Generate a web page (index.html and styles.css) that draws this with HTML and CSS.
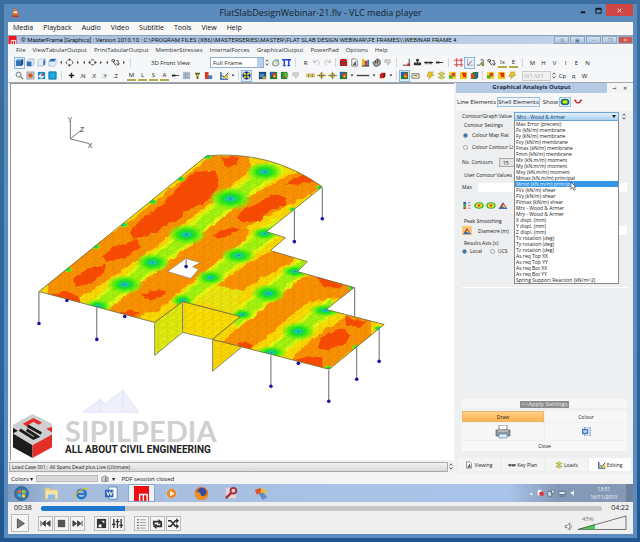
FILE: index.html
```html
<!DOCTYPE html>
<html lang="en">
<head>
<meta charset="utf-8">
<title>FlatSlabDesignWebinar-21.flv - VLC media player</title>
<link rel="stylesheet" href="styles.css">
</head>
<body>
<svg class="defs" width="0" height="0" aria-hidden="true">
  <symbol id="cube" viewBox="0 0 10 10"><path d="M1 3l2-2h6v6l-2 2H1z" fill="#2f6fb8"/><path d="M1 3l2-2h6L7 3z" fill="#74a9dd"/><path d="M7 3l2-2v6L7 9z" fill="#1c467c"/></symbol>
  <symbol id="cube-front" viewBox="0 0 10 10"><path d="M1 3l2-2h6v6l-2 2H1z" fill="#d9e8f5" stroke="#7791ad" stroke-width=".5"/><path d="M1 4h5v5H1z" fill="#2f6fb8"/></symbol>
  <symbol id="cube-side" viewBox="0 0 10 10"><path d="M1 3l2-2h6v6l-2 2H1z" fill="#e3eef7" stroke="#7791ad" stroke-width=".5"/><path d="M7 3l2-2v6L7 9z" fill="#2f6fb8"/></symbol>
  <symbol id="cube-top" viewBox="0 0 10 10"><path d="M1 3l2-2h6v6l-2 2H1z" fill="#e3eef7" stroke="#7791ad" stroke-width=".5"/><path d="M1 4l2-3h6L7 4z" fill="#2f6fb8"/></symbol>
  <symbol id="left" viewBox="0 0 6 10"><path d="M4 3v4L2 5z" fill="#444"/></symbol>
  <symbol id="right" viewBox="0 0 6 10"><path d="M2 3v4l2-2z" fill="#444"/></symbol>
  <symbol id="down" viewBox="0 0 6 10"><path d="M1.500 4h3L3 6z" fill="#222"/></symbol>
  <symbol id="rot-v" viewBox="0 0 10 10"><path d="M3 3L5 1l2 2M3 7l2 2 2-2M8 3.500c1 1 1 2 0 3M2 3.500c-1 1-1 2 0 3M5 1v2M5 7v2" fill="none" stroke="#333"/></symbol>
  <symbol id="rot-h" viewBox="0 0 10 10"><path d="M3 3L1 5l2 2M7 3l2 2-2 2M3.500 2.500c1-1 2-1 3 0M3.500 7c1 1 2 1 3 0M1 5h2M7 5h2" fill="none" stroke="#333"/></symbol>
  <symbol id="rot-z" viewBox="0 0 10 10"><path d="M1 4V2h3v2H2l2 2M6 3h2v4M6 6l2 2 1.500-2M3 6l3 2" fill="none" stroke="#444"/></symbol>
  <symbol id="spin" viewBox="0 0 6 10"><path d="M1.500 4L3 2l1.500 2M1.500 6L3 8l1.500-2" fill="none" stroke="#333" stroke-width=".8"/></symbol>
  <symbol id="hand" viewBox="0 0 10 10"><path d="M2 4l3-2 3 1 1 4-3 2-4-1z" fill="#eee0b8" stroke="#6785a8"/><circle cx="7" cy="3" r="2" fill="#8bb5dc"/></symbol>
  <symbol id="tt" viewBox="0 0 10 10"><path d="M0 2h10M2.500 2v6M7.500 2v6M1 8.500h3M6 8.500h3" fill="none" stroke="#2144e0" stroke-width="1.600"/></symbol>
  <symbol id="undo" viewBox="0 0 10 10"><path d="M2 2v3h3M2 5c2-4 7-2 6 1L6 8" fill="none" stroke="#bbb"/></symbol>
  <symbol id="redo" viewBox="0 0 10 10"><path d="M8 2v3H5M8 5C6 1 1 3 2 6l2 2" fill="none" stroke="#bbb"/></symbol>
  <symbol id="stack" viewBox="0 0 10 10"><path d="M2 1h6l1 2v6H1V3z" fill="#c9151a"/><path d="M1 4h8M1 7h8" stroke="#555"/></symbol>
  <symbol id="page" viewBox="0 0 10 10"><path d="M2 1h4l2 2v6H2z" fill="#fff" stroke="#777"/><path d="M3 8l3-5 1 5z" fill="#555"/></symbol>
  <symbol id="chart" viewBox="0 0 10 10"><path d="M1 1h3v8H1z" fill="#e2bd24"/><path d="M4 3h3v6H4z" fill="#c53b34"/><path d="M7 2h2v7H7z" fill="#247bb4"/><path d="M1 9h8" stroke="#333"/></symbol>
  <symbol id="bino" viewBox="0 0 10 10"><path d="M1 5l3-2 2-2 3 2v4L6 9H3z" fill="#aaa" stroke="#444"/><path d="M4 3v3M6 2v4" stroke="#333"/></symbol>
  <symbol id="ghost" viewBox="0 0 10 10"><path d="M2 2h6v3L5 8V5H2z" fill="#d3d3d3" stroke="#bdbdbd"/></symbol>
  <symbol id="axis-red" viewBox="0 0 10 10"><path d="M8 1v6M1 8h7" stroke="#333" fill="none"/><path d="M6 6h3v3H6z" fill="#d1242b"/></symbol>
  <symbol id="person" viewBox="0 0 10 10"><circle cx="5" cy="2.500" r="1.600" fill="#333"/><path d="M1 8V5h2l1 1V4h2v2l1-1h2v3z" fill="#333"/></symbol>
  <symbol id="link" viewBox="0 0 10 10"><path d="M1 4h3v3H1zM5 4h4v3H5z" fill="#777"/><path d="M0 5h10" stroke="#222"/></symbol>
  <symbol id="member" viewBox="0 0 10 10"><path d="M1 5h8" stroke="#333"/><path d="M1 4h4v2H1z" fill="#222"/></symbol>
  <symbol id="grid" viewBox="0 0 10 10"><path d="M3 0v10M8 0v10M0 2.500h10M0 7.500h10" stroke="#d53535"/></symbol>
  <symbol id="axes" viewBox="0 0 10 10"><path d="M3 1v7h6" fill="none" stroke="#8b8bb0" stroke-width=".8"/><path d="M3 8l5-5" stroke="#b33"/></symbol>
  <symbol id="node" viewBox="0 0 10 10"><path d="M1 8h3l3-4M5 2h3v3" fill="none" stroke="#555"/><path d="M6 5h3v4H6z" fill="#8a8b37"/></symbol>
  <symbol id="star" viewBox="0 0 10 10"><path d="M5 2v6M2 5h6" stroke="#222" stroke-width="1.500"/></symbol>
  <symbol id="lens" viewBox="0 0 10 10"><circle cx="4" cy="4" r="2.800" fill="#dce9f2" stroke="#777"/><path d="M6 6l3 3" stroke="#777" stroke-width="1.400"/></symbol>
  <symbol id="zoomred" viewBox="0 0 10 10"><path d="M1 1h8v8H1z" fill="#c2c9cf" stroke="#777" stroke-width=".6"/><circle cx="5" cy="5" r="2.500" fill="#d35720"/></symbol>
  <symbol id="zoomblue" viewBox="0 0 10 10"><path d="M1 1h8v8H1z" fill="#1689d3"/><path d="M1 6l4-4 3 4-3 3z" fill="#cfe9f5"/><circle cx="6" cy="4" r="1.500" fill="#d34b30"/></symbol>
  <symbol id="bluesq" viewBox="0 0 10 10"><path d="M1 1h8v8H1z" fill="#12aee2" stroke="#17689b"/></symbol>
  <symbol id="grey" viewBox="0 0 10 10"><path d="M1 1h8v8H1z" fill="#aebfd1"/><path d="M1 4h8M1 7h8M4 1v8" stroke="#8097b1" stroke-width=".6"/></symbol>
  <symbol id="funnel" viewBox="0 0 10 10"><path d="M2 2h6L6 6v3H4V6z" fill="#575c2a"/><path d="M4 4h3v2H4z" fill="#ded43c"/></symbol>
  <symbol id="steps" viewBox="0 0 10 10"><path d="M1 1h4v4h4v4H1z" fill="#d83d2a"/><path d="M5 5h4v4H5z" fill="#4385d1"/></symbol>
  <symbol id="pencil" viewBox="0 0 10 10"><path d="M1 1v8h8" fill="none" stroke="#2458a6" stroke-width="1.500"/><path d="M2 5l3 2 4-5" fill="none" stroke="#222"/><path d="M3 8l6-4v4z" fill="#e6c726"/></symbol>
  <symbol id="wheel" viewBox="0 0 10 10"><circle cx="5" cy="5" r="4.500" fill="#15319b"/><path d="M2 2l6 6M8 2L2 8" stroke="#f1e12c" stroke-width="2"/><circle cx="5" cy="5" r="1.300" fill="#333"/></symbol>
  <symbol id="map-blue" viewBox="0 0 10 10"><path d="M1 1h8v8H1z" fill="#1d4676"/><path d="M2 3h5v4H2z" fill="#3b91c5"/><path d="M5 6h4v3H5z" fill="#b99a4e"/></symbol>
  <symbol id="map" viewBox="0 0 10 10"><path d="M1 1h8v8H1z" fill="#187c35"/><path d="M1 1h4v4H1z" fill="#2660c9"/><path d="M4 3l4-1v5L5 8z" fill="#ed3e1c"/><path d="M5 5h2v2H5z" fill="#f8de20"/></symbol>
  <symbol id="map-green" viewBox="0 0 10 10"><path d="M1 1h7v8H1z" fill="#23872f"/><path d="M4 2h5v5H4z" fill="#67b24c"/><path d="M3 6h3v2H3z" fill="#ae5920"/></symbol>
  <symbol id="map-yellow" viewBox="0 0 10 10"><path d="M1 1h8v8H1z" fill="#e5d838"/><path d="M4 2h4v4H4z" fill="#df3f22"/><path d="M1 5h4v3H1z" fill="#48a62f"/></symbol>
  <symbol id="map-red" viewBox="0 0 10 10"><path d="M1 1h8v8H1z" fill="#f2cd21"/><path d="M3 2h5v5H5z" fill="#e52a18"/></symbol>
  <symbol id="block" viewBox="0 0 10 10"><path d="M1 3l3-2h5v6L7 9H1z" fill="#247c3b"/><path d="M1 3h4v5H1z" fill="#de4230"/><path d="M7 3l2-2v6L7 9z" fill="#205dae"/></symbol>
  <symbol id="beam" viewBox="0 0 10 10"><path d="M0 3h10v4H0z" fill="#d9c66a"/><path d="M3 3v4M7 3v4" stroke="#777"/></symbol>
  <symbol id="beam2" viewBox="0 0 10 10"><path d="M1 5l4-4 4 4-4 4z" fill="#d6b932"/><path d="M0 5h10M5 1v8" stroke="#777"/></symbol>
  <symbol id="line" viewBox="0 0 14 10"><path d="M0 5h14" stroke="#444" stroke-width="1.500"/></symbol>
  <symbol id="redcube" viewBox="0 0 10 10"><path d="M2 4l2-2h4v4L6 8H2z" fill="#c62724"/><path d="M6 4l2-2v4L6 8z" fill="#5f1717"/></symbol>
  <symbol id="layers" viewBox="0 0 10 10"><path d="M1 3l4-2 4 2-4 2zM1 7l4-2 4 2-4 2z" fill="#d6d34c" stroke="#86893c" stroke-width=".5"/></symbol>
  <symbol id="bolt" viewBox="0 0 10 10"><path d="M3 1h5L6 4h3L3 9l1-3H1z" fill="#ebc425" stroke="#9a852d" stroke-width=".5"/></symbol>
  <symbol id="tag" viewBox="0 0 10 10"><path d="M1 3h8v5H1z" fill="#ece7c4" stroke="#777"/><path d="M3 5h4" stroke="#777"/></symbol>
  <symbol id="tri" viewBox="0 0 10 10"><path d="M0 9L5 1l5 8z" fill="#3c65bb"/><path d="M2 6h6L5 2z" fill="#e34824"/><path d="M4 6l2-2 2 4z" fill="#f5da34"/></symbol>
  <symbol id="contour" viewBox="0 0 12 10"><ellipse cx="6" cy="5" rx="5.500" ry="4" fill="#2db42a"/><ellipse cx="6" cy="5" rx="3.800" ry="2.700" fill="#f4ec23"/><ellipse cx="6" cy="5" rx="1.800" ry="1.500" fill="#ef391f"/></symbol>
  <symbol id="contour-show" viewBox="0 0 12 10"><ellipse cx="6" cy="5" rx="5.500" ry="4" fill="#1b3fb5"/><ellipse cx="6" cy="5" rx="4.300" ry="3" fill="#2db42a"/><ellipse cx="6" cy="5" rx="2.800" ry="1.800" fill="#f4ec23"/></symbol>
</svg>

<main class="desktop">
<section class="window">
  <header class="titlebar">
    <svg class="cone" viewBox="0 0 10 10"><path d="M4 0h3l2 8H2z" fill="#f26b16"/><path d="M3.500 3h4l.5 2H3z" fill="#fff"/><path d="M1 8h9v2H1z" fill="#c73714"/></svg>
    <h1>FlatSlabDesignWebinar-21.flv - VLC media player</h1>
    <div class="winbtns">
      <button aria-label="Minimize"><svg viewBox="0 0 10 10"><path d="M3 7h5" stroke="#111" stroke-width="2"/></svg></button>
      <button aria-label="Maximize"><svg viewBox="0 0 10 10"><path d="M2 3h6v5H2z" fill="none" stroke="#111"/><path d="M2 3h6" stroke="#111" stroke-width="2"/></svg></button>
      <button class="close" aria-label="Close"><svg viewBox="0 0 10 10"><path d="M3 3l4 4M7 3L3 7" stroke="#fff"/></svg></button>
    </div>
  </header>

  <div class="client">
    <nav class="menubar">
      <a href="#">Media</a><a href="#">Playback</a><a href="#">Audio</a><a href="#">Video</a><a href="#">Subtitle</a><a href="#">Tools</a><a href="#">View</a><a href="#">Help</a>
    </nav>

    <div class="apptitle">
      <svg class="mlogo" viewBox="0 0 9 9"><path d="M0 0h9v9H0z" fill="#ee1519"/><path d="M3 9V5h5v4M5.500 5v4" fill="none" stroke="#fff"/></svg>
      <h2>© MasterFrame [Graphics] : Version 2010.10 : C:\PROGRAM FILES (X86)\MASTERSERIES\MASTER\FLAT SLAB DESIGN WEBINAR\FE FRAMES\\WEBINAR FRAME 4</h2>
      <div class="appbtns"><button aria-label="Help">①</button><button aria-label="Layout">▣</button><button aria-label="Minimize frame">–</button><button aria-label="Restore frame">❐</button><button class="red" aria-label="Close frame">×</button></div>
    </div>
    <nav class="appmenu">
      <a href="#">File</a><a href="#">ViewTabularOutput</a><a href="#">PrintTabularOutput</a><a href="#">MemberStresses</a><a href="#">InternalForces</a><a href="#">GraphicalOutput</a><a href="#">PowerPad</a><a href="#">Options</a><a href="#">Help</a>
    </nav>

    <div class="toolbar">
      <button class="on" aria-label="3D view"><svg><use href="#cube"/></svg></button>
      <button aria-label="Front"><svg><use href="#cube-front"/></svg></button>
      <button aria-label="Side"><svg><use href="#cube-side"/></svg></button>
      <button aria-label="Top"><svg><use href="#cube-top"/></svg></button>
      <button class="s" aria-label="Tilt back"><svg><use href="#left"/></svg></button>
      <button aria-label="Tilt"><svg><use href="#rot-v"/></svg></button>
      <button class="s" aria-label="Tilt forward"><svg><use href="#right"/></svg></button>
      <button class="s" aria-label="Turn left"><svg><use href="#left"/></svg></button>
      <button aria-label="Turn"><svg><use href="#rot-h"/></svg></button>
      <button class="s" aria-label="Turn right"><svg><use href="#right"/></svg></button>
      <button class="s" aria-label="Roll left"><svg><use href="#left"/></svg></button>
      <button aria-label="Roll"><svg><use href="#rot-z"/></svg></button>
      <button class="s" aria-label="Roll right"><svg><use href="#right"/></svg></button>
      <i class="sep"></i>
      <span class="viewname">3D Front View</span>
      <select class="frame" aria-label="Frame"><option>Full Frame</option></select>
      <button class="s" aria-label="Step frame"><svg><use href="#spin"/></svg></button>
      <button aria-label="Pick"><svg><use href="#hand"/></svg></button>
      <button aria-label="Supports"><svg><use href="#tt"/></svg></button>
      <i class="sep"></i>
      <button>R</button>
      <button aria-label="Undo"><svg><use href="#undo"/></svg></button>
      <button aria-label="Redo"><svg><use href="#redo"/></svg></button>
      <i class="sep n"></i>
      <button aria-label="Cases"><svg><use href="#stack"/></svg></button>
      <button aria-label="Preview"><svg><use href="#page"/></svg></button>
      <button aria-label="Chart"><svg><use href="#chart"/></svg></button>
      <button aria-label="Find"><svg><use href="#bino"/></svg></button>
      <button aria-label="Paint"><svg><use href="#ghost"/></svg></button>
      <i class="sep"></i>
      <button aria-label="Origin"><svg><use href="#axis-red"/></svg></button>
      <button aria-label="Group"><svg><use href="#person"/></svg></button>
      <button aria-label="Link"><svg><use href="#link"/></svg></button>
      <button aria-label="Member"><svg><use href="#member"/></svg></button>
      <i class="sep"></i>
      <button aria-label="Grid"><svg><use href="#grid"/></svg></button>
      <button class="on" aria-label="Axes"><svg><use href="#axes"/></svg></button>
      <button aria-label="Nodes"><svg><use href="#node"/></svg></button>
      <button aria-label="Joint"><svg><use href="#rot-z"/></svg></button>
      <button class="mark">Ix</button>
      <button class="mark">E</button>
      <i class="sep"></i>
      <button>M</button><button>H</button><button>V</button><button>I</button><button>E</button><button>N</button>
    </div>

    <div class="toolbar">
      <button aria-label="Zoom"><svg><use href="#lens"/></svg></button>
      <button aria-label="Zoom window"><svg><use href="#zoomred"/></svg></button>
      <button aria-label="Zoom model"><svg><use href="#zoomblue"/></svg></button>
      <button aria-label="Fit"><svg><use href="#bluesq"/></svg></button>
      <i class="sep"></i>
      <button aria-label="Centre"><svg><use href="#star"/></svg></button>
      <button>.N</button><button>.X</button><button>.Y</button><button>.Z</button>
      <i class="gap"></i>
      <button class="mark">M</button><button class="mark">L</button><button class="mark">S</button><button class="mark">A</button>
      <button aria-label="Member size"><svg><use href="#member"/></svg></button>
      <button aria-label="Table"><svg><use href="#grey"/></svg></button>
      <button aria-label="Filter"><svg><use href="#funnel"/></svg></button>
      <button aria-label="Steps"><svg><use href="#steps"/></svg></button>
      <i class="gap"></i>
      <button aria-label="Draw"><svg><use href="#pencil"/></svg></button>
      <button class="s" aria-label="Draw options"><svg><use href="#down"/></svg></button>
      <i class="sep n"></i>
      <button class="on" aria-label="Contours"><svg><use href="#wheel"/></svg></button>
      <i class="gap"></i>
      <button aria-label="Map one"><svg><use href="#map-blue"/></svg></button>
      <button aria-label="Map two"><svg><use href="#map"/></svg></button>
      <button aria-label="Map three"><svg><use href="#map-green"/></svg></button>
      <button aria-label="Map four"><svg><use href="#ghost"/></svg></button>
      <i class="gap n"></i>
      <button aria-label="Beam"><svg><use href="#beam"/></svg></button>
      <button aria-label="Beam end"><svg><use href="#beam2"/></svg></button>
      <button aria-label="Beam top"><svg><use href="#beam2"/></svg></button>
      <button aria-label="Fill"><svg><use href="#map"/></svg></button>
      <button class="s" aria-label="Fill options"><svg><use href="#down"/></svg></button>
      <button class="wide" aria-label="Line"><svg><use href="#line"/></svg></button>
      <button class="s" aria-label="Line options"><svg><use href="#down"/></svg></button>
      <button aria-label="Solid"><svg><use href="#redcube"/></svg></button>
      <button class="s" aria-label="Solid options"><svg><use href="#down"/></svg></button>
      <i class="sep n"></i>
      <button class="on" aria-label="Colour map"><svg><use href="#map"/></svg></button>
      <button aria-label="Label"><svg><use href="#tag"/></svg></button>
      <i class="gap n"></i>
      <button aria-label="Flash"><svg><use href="#bolt"/></svg></button>
      <button aria-label="Layers"><svg><use href="#layers"/></svg></button>
      <button aria-label="Plate"><svg><use href="#map-yellow"/></svg></button>
      <button aria-label="Stress"><svg><use href="#map-red"/></svg></button>
      <button aria-label="Block"><svg><use href="#block"/></svg></button>
      <i class="sep n"></i>
      <button aria-label="Plate two"><svg><use href="#map-yellow"/></svg></button>
      <button aria-label="Stress two"><svg><use href="#map-red"/></svg></button>
      <button aria-label="Flag"><svg><use href="#bolt"/></svg></button>
      <i class="gap n"></i>
      <select class="wind" aria-label="Wind case" disabled><option>W1-W1</option></select>
      <button class="s" aria-label="Step wind"><svg><use href="#spin"/></svg></button>
      <button>Cp</button><button>q</button><button>W</button>
    </div>

    <div class="work">
      <div class="left">
        <div class="canvas">
          <svg class="model" viewBox="10 84 444 376" role="img" aria-label="Slab contour plot">
            <defs>
              <clipPath id="slab"><path d="M38 292L206 156Q270 150 322 187L266 232l19 6-15 13 37 11-10 10 57 16-28 22 58 15-55 45-117-30 28-23-58-15-28 21z"/></clipPath>
              <filter id="rough" x="0" y="0" width="1" height="1"><feTurbulence type="fractalNoise" baseFrequency=".14" numOctaves="2" seed="4"/><feDisplacementMap in="SourceGraphic" scale="5" xChannelSelector="R" yChannelSelector="G"/></filter>
              <pattern id="mesh" width="9" height="7" patternUnits="userSpaceOnUse"><path d="M0 7L9 0M0 1l9 2.500M0 5l9 2M4 0l2 7" stroke="#665b22" stroke-width=".4" stroke-dasharray="2 1" fill="none"/></pattern>
              <radialGradient id="peak"><stop offset="0" stop-color="#2a62d0"/><stop offset=".1" stop-color="#18c6dc"/><stop offset=".2" stop-color="#0cd873"/><stop offset=".4" stop-color="#1aec1e"/><stop offset=".7" stop-color="#72f80b" stop-opacity=".85"/><stop offset="1" stop-color="#a2f80b" stop-opacity="0"/></radialGradient>
            </defs>
            <g stroke="#777" stroke-width=".8" fill="#e2ee0c"><path d="M154 323l28-21v31l-28 23z"/><path d="M182 302l58 15-28 23-30-7z" fill="#ffe100"/><path d="M212 340v32l30-25z" fill="#ffd900"/></g>
            <g clip-path="url(#slab)">
              <path d="M30 140h370v240H30z" fill="#ffdd00"/>
              <g filter="url(#rough)">
                <g fill="none" stroke="#ff9205" stroke-linecap="round">
                  <path d="M50 296L96 266 140 236 190 196 232 162" stroke-width="36"/>
                  <path d="M118 318L150 292 188 258 240 216 316 176" stroke-width="26"/>
                  <path d="M150 300L195 263 235 232" stroke-width="26"/>
                  <path d="M228 289L256 270 284 256" stroke-width="20"/>
                  <path d="M224 356L276 313 304 290 345 285" stroke-width="25"/>
                  <path d="M308 366L336 342 370 322" stroke-width="33"/>
                </g>
                <g fill="none" stroke="#e6fb09" stroke-width="17"><path d="M88 314L126 284 158 260 190 234 230 200 282 164"/><path d="M184 304L210 279 238 256 280 225"/><path d="M232 323L268 294 306 264"/><path d="M262 362L298 332 334 304"/></g>
                <g fill="none" stroke="#a3f80a" stroke-width="10"><path d="M92 310L126 284 158 260 190 234 230 200 274 168"/><path d="M180 304L210 279 238 256 274 230"/><path d="M232 323L268 294 306 264"/><path d="M262 362L298 332 334 304"/></g>
                <path d="M196 300l22-14 24 6-8 24z" fill="#eee808"/>
                <g fill="#ff4a05">
                  <path d="M72 280l15-11 18-5-2 9-12 11-16 3z"/><path d="M100 257l12-9 24-8 2 8-13 11-18 4z"/><path d="M130 231l10-11 17-12 14-8 13 4-2 13-14 7-14 9-20 7z"/><path d="M164 204l12-15 18-17 21-1 4 14-10 15-18 9-16 3z"/>
                  <path d="M48 297l16-6 14 6 2 8-28-3z"/><path d="M139 296l10-4 17-2-2 6-14 5z"/><path d="M117 315l12-5 9 3-5 6z"/>
                  <path d="M220 158l18-1-2 8-9 4z"/><path d="M286 184l13-8 13-1 1 6-15 4z"/><path d="M236 217l7-7 14-6 14-9 15 3-2 8-15 5-9 10-18 2z"/><path d="M212 236l13-7 15-1-4 5-17 6z"/>
                  <path d="M314 276l15 3 14 5-4 5-17-3z"/><path d="M344 317l11 3 11 3-8 5-12-3z"/><path d="M318 343l9-9 17-5 6 7-8 10-14 5-10-2z"/><path d="M290 362l17-5 16 1-2 12-24-4z"/><path d="M236 345l9-3 8 4-7 6z"/>
                </g>
              </g>
              <g fill="url(#peak)">
                <ellipse cx="97" cy="307" rx="14" ry="8"/><ellipse cx="124" cy="285" rx="19" ry="10"/><ellipse cx="152" cy="263" rx="18" ry="10"/><ellipse cx="186" cy="235" rx="20" ry="11"/><ellipse cx="230" cy="199" rx="22" ry="12"/><ellipse cx="264" cy="172" rx="19" ry="10"/>
                <ellipse cx="182" cy="301" rx="12" ry="7"/><ellipse cx="210" cy="278" rx="15" ry="8"/><ellipse cx="238" cy="256" rx="18" ry="9"/><ellipse cx="264" cy="234" rx="14" ry="7"/>
                <ellipse cx="242" cy="315" rx="11" ry="6"/><ellipse cx="268" cy="294" rx="18" ry="10"/><ellipse cx="295" cy="272" rx="15" ry="7"/>
                <ellipse cx="271" cy="353" rx="16" ry="7"/><ellipse cx="298" cy="332" rx="18" ry="10"/><ellipse cx="325" cy="311" rx="17" ry="7"/>
                <ellipse cx="67" cy="270" rx="5" ry="3"/><ellipse cx="95" cy="247" rx="5" ry="3"/><ellipse cx="123" cy="225" rx="5" ry="3"/><ellipse cx="152" cy="202" rx="5" ry="3"/><ellipse cx="180" cy="179" rx="5" ry="3"/><ellipse cx="207" cy="157" rx="5" ry="3"/><ellipse cx="320" cy="188" rx="5" ry="3"/><ellipse cx="293" cy="210" rx="5" ry="3"/><ellipse cx="352" cy="288" rx="5" ry="3"/><ellipse cx="378" cy="329" rx="5" ry="3"/><ellipse cx="356" cy="348" rx="5" ry="3"/><ellipse cx="328" cy="369" rx="5" ry="3"/>
              </g>
            </g>
            <path d="M38 292L206 156Q270 150 322 187L266 232l19 6-15 13 37 11-10 10 57 16-28 22 58 15-55 45-117-30 28-23-58-15-28 21z" fill="url(#mesh)" fill-opacity=".45" stroke="#6d6a45" stroke-width=".8"/>
            <path d="M154 323l28-21 58 15-28 23v32l30-25M154 323v33l28-23 30 7" fill="url(#mesh)" fill-opacity=".5"/>
            <path d="M167 272l18-13 15 4-8 4 6 3-8 9z" fill="#fff" stroke="#777" stroke-width=".6"/>
            <path d="M38 292v32M96 308v32M185.500 260v7M322 188v31M294 210v32M354.500 288v29M379 329v33M356.500 348v32M270.500 356v31M328.500 371v31" stroke="#666" fill="none"/>
            <g fill="#1414a8"><circle cx="38" cy="324" r="1.800"/><circle cx="66" cy="301" r="1.800"/><circle cx="96" cy="340" r="1.800"/><circle cx="124" cy="317" r="1.800"/><circle cx="185.500" cy="267" r="1.800"/><circle cx="322" cy="219" r="1.800"/><circle cx="294" cy="242" r="1.800"/><circle cx="379" cy="362" r="1.800"/><circle cx="356.500" cy="380" r="1.800"/><circle cx="270.500" cy="387" r="1.800"/><circle cx="298" cy="364" r="1.800"/><circle cx="328.500" cy="402" r="1.800"/></g>
            <path d="M69.500 121v18l18 4.500M69.500 139l10-8" fill="none" stroke="#555" stroke-width=".8"/>
            <g class="axislabel"><text x="67" y="122">Y</text><text x="79" y="132">Z</text><text x="87" y="148">X</text></g>
            <path d="M82 413l18-13 4 5 18-14 16 22zM99 400v13M122 391v22" fill="#eff0fc" stroke="#dde0f6" stroke-width=".8"/>
          </svg>
          <div class="brand">
            <svg viewBox="0 0 42 45"><path d="M1 17l20 14v14L1 34z" fill="#1c1c1c"/><path d="M41 16L21 31v14l20-11z" fill="#e22f2a"/><path d="M21 0l20 10v3l-5 2 5 2v4L21 32 1 20v-9z" fill="#cfcfcf"/><path d="M11 10l11-6 9 5-4 2-5-3-5 3v3z" fill="#e22f2a"/><path d="M41 13v6l-6-4z" fill="#e22f2a"/><path d="M1 14l5 3-5 3z" fill="#1c1c1c"/><path d="M8 16l14 9 4-2-11-7M16 12l14 8" fill="none" stroke="#1c1c1c" stroke-width="3"/></svg>
            <div><strong>SIPILPEDIA</strong><span>ALL ABOUT CIVIL ENGINEERING</span></div>
          </div>
        </div>
        <div class="loadrow"><select aria-label="Load case"><option>Load Case 001 : All Spans Dead plus Live (Ultimate)</option></select><svg class="spin"><use href="#spin"/></svg></div>
      </div>

      <aside class="panel">
        <header><h3>Graphical Analsyis Output</h3><button aria-label="Pin">⊣</button><button aria-label="Close panel">✕</button></header>
        <div class="tabs"><button>Line Elements</button><button class="on">Shell Elements</button><span>Show</span><button class="on ic" aria-label="Show contours"><svg><use href="#contour-show"/></svg></button><button class="ic" aria-label="Show diagram"><svg viewBox="0 0 12 10"><path d="M1 3h2c0 4 6 4 6 0h2" fill="none" stroke="#c22" stroke-width="1.500"/></svg></button></div>
        <div class="body">
          <div class="graphrow">
            <label for="gv">Contour/Graph Value</label>
            <div class="combo">
              <select id="gv"><option>Mrx - Wood &amp; Armer</option></select>
              <svg class="caret" viewBox="0 0 6 4"><path d="M1 0h4L3 3z" fill="#123"/></svg>
              <ul role="listbox" aria-label="Values">
                <li>Max Error (precent)</li><li>Fx (kN/m) membrane</li><li>Fy (kN/m) membrane</li><li>Fxy (kN/m) membrane</li><li>Fmax (kN/m) membrane</li><li>Fmin (kN/m) membrane</li><li>Mx (kN.m/m) moment</li><li>My (kN.m/m) moment</li><li>Mxy (kN.m/m) moment</li><li>Mmax (kN.m/m) principal</li><li class="sel">Mmin (kN.m/m) principal<svg class="cursor" viewBox="0 0 8 10"><path d="M1 0v8l2-2 1.500 3.500 1.500-1L4.500 5.500H7z" fill="#fff" stroke="#333" stroke-width=".7"/></svg></li><li>FVx (kN/m) shear</li><li>FVy (kN/m) shear</li><li>FVmax (kN/m) shear</li><li>Mrx - Wood &amp; Armer</li><li>Mry - Wood &amp; Armer</li><li>X displ. (mm)</li><li>Y displ. (mm)</li><li>Z displ. (mm)</li><li>Tx rotation (deg)</li><li>Ty rotation (deg)</li><li>Tz rotation (deg)</li><li>As req Top XX</li><li>As req Top YY</li><li>As req Bot XX</li><li>As req Bot YY</li><li>Spring Support Reaction (kN/m^2)</li>
              </ul>
            </div>
            <svg class="spin"><use href="#spin"/></svg>
          </div>
          <h4>Contour Settings</h4>
          <label class="opt"><input type="radio" name="cm" checked>Colour Map Flat</label>
          <label class="opt"><input type="radio" name="cm">Colour Contour Li</label>
          <div class="field first"><label for="nc">No. Contours</label><select id="nc" class="nc"><option>15</option></select></div>
          <h4 class="ucv">User Contour Values</h4>
          <div class="field maxrow"><label for="mx">Max</label><input id="mx" type="text"></div>
          <div class="icons">
            <button aria-label="Legend"><svg viewBox="0 0 10 10"><path d="M1 1h3v3H1z" fill="#2f55cf"/><path d="M1 4h3v3H1z" fill="#37b442"/><path d="M1 7h3v2H1z" fill="#e33b24"/><path d="M6 2h3M6 5h3M6 8h3" stroke="#888"/></svg></button>
            <button aria-label="Contour fill"><svg><use href="#contour"/></svg></button>
            <button aria-label="Contour lines"><svg><use href="#contour"/></svg></button>
            <button aria-label="Peaks"><svg><use href="#tri"/></svg></button>
          </div>
          <h4>Peak Smoothing</h4>
          <div class="field dia"><button class="hot" aria-label="Smooth peaks"><svg><use href="#tri"/></svg></button><label for="dm">Diametre (m)</label><input id="dm" type="text"></div>
          <h4 class="ra">Results Axis (x)</h4>
          <div class="axis"><label><input type="radio" name="ax" checked>Local</label><label><input type="radio" name="ax">UCS</label></div>
          <div class="rule"></div>
          <div class="apply"><button>&lt;&lt;Apply Settings</button></div>
          <div class="actions">
            <button class="draw">Draw</button><button>Colour</button>
            <button class="tall" aria-label="Print"><svg viewBox="0 0 16 14"><path d="M4 0h8v5H4z" fill="#fff" stroke="#888"/><path d="M1 5h14v6H1z" fill="#8e959c" stroke="#555" stroke-width=".6"/><path d="M3 6h10" stroke="#ddd"/><path d="M4 9h8v4H4z" fill="#dcebf7" stroke="#5f8bb5" stroke-width=".7"/></svg></button>
            <button class="tall" aria-label="Export to Word"><svg class="sm" viewBox="0 0 10 10"><path d="M3 0h6v10H3z" fill="#fff" stroke="#6b93c8"/><path d="M0 2h7v6H0z" fill="#3b78c0"/><path d="M1.500 3.500l1 3 1-3 1 3 1-3" stroke="#fff" stroke-width=".8" fill="none"/></svg></button>
          </div>
          <button class="closebtn">Close</button>
        </div>
        <nav class="ptabs">
          <button><svg><use href="#page"/></svg>Viewing</button><button><svg><use href="#link"/></svg>Key Plan</button><button><svg><use href="#layers"/></svg>Loads</button><button class="cur"><svg><use href="#pencil"/></svg>Editing</button>
        </nav>
      </aside>
    </div>

    <div class="status"><label for="cl">Colors ▾</label><input id="cl" type="text" readonly><svg viewBox="0 0 10 10"><path d="M1 3l4-2 4 2v5H1z" fill="#ccd" stroke="#666" stroke-width=".7"/><path d="M6 3v5" stroke="#444"/></svg><span>▾</span><span class="msg">PDF session closed</span></div>

    <div class="taskbar">
      <button aria-label="Start"><svg viewBox="0 0 16 16"><circle cx="8" cy="8" r="7.500" fill="#3674ac" stroke="#254d7c" stroke-width=".6"/><path d="M4 5l3.500-1v3.500L3.500 8z" fill="#ee6a2e"/><path d="M8.500 4l4 1-.5 3.500-3.500-1z" fill="#9cc943"/><path d="M3.500 9l4-.5V12L4 11z" fill="#4fb4ea"/><path d="M8.500 8.500l3.500 1-.5 3-3-.5z" fill="#fbd33c"/></svg></button>
      <button aria-label="Explorer"><svg viewBox="0 0 16 16"><path d="M1 2h5l1 2h8v10H1z" fill="#e8cf78"/><path d="M2 5h12v8H2z" fill="#f6e7a9"/><path d="M4 9h8v5H4z" fill="#86bfe2"/></svg></button>
      <button aria-label="Internet Explorer"><svg viewBox="0 0 16 16"><circle cx="8" cy="8.500" r="4.500" fill="none" stroke="#1f78c8" stroke-width="2.600"/><path d="M4 8.500h8" stroke="#1f78c8" stroke-width="2"/><path d="M1 13C0 8 10 1 15 3" fill="none" stroke="#e8b928" stroke-width="1.500"/></svg></button>
      <button aria-label="Word"><svg viewBox="0 0 16 16"><path d="M5 1h9v13H5z" fill="#fff" stroke="#5a83b8"/><path d="M1 4h9v8H1z" fill="#2f64ae"/><path d="M3 6l1.500 4L6 6l1.500 4L9 6" stroke="#fff" fill="none"/></svg></button>
      <button class="active" aria-label="MasterFrame"><svg viewBox="0 0 16 16"><path d="M0 0h16v16H0z" fill="#f00d0d"/><path d="M6 16V9h8v7M10 9v7" fill="none" stroke="#fff" stroke-width="1.500"/></svg></button>
      <button aria-label="Media Player"><svg viewBox="0 0 16 16"><path d="M2 3h12v10H2z" fill="#a9cbe8"/><circle cx="8" cy="8" r="5" fill="#f08a24"/><path d="M6.500 5v6L11 8z" fill="#fff"/></svg></button>
      <button aria-label="Firefox"><svg viewBox="0 0 16 16"><circle cx="8" cy="8" r="7" fill="#e0661b"/><circle cx="8.500" cy="6.500" r="4.500" fill="#2b4f9c"/><path d="M1 6c2 2 3 0 5 1s0 4 4 4 5-3 5-5c1 6-3 9-7 9S0 12 1 6z" fill="#f08f22"/></svg></button>
      <button aria-label="Access"><svg viewBox="0 0 16 16"><path d="M2 2h11v11H2z" fill="#ead3d3"/><circle cx="10" cy="5" r="3" fill="none" stroke="#a92c3c" stroke-width="2"/><path d="M8 7l-6 6" stroke="#a92c3c" stroke-width="2.500"/></svg></button>
      <button aria-label="Tools"><svg viewBox="0 0 16 16"><path d="M1 4l6-2 2 5-6 2z" fill="#e0522b"/><path d="M8 2l6 3-3 5-4-3z" fill="#e7c03d"/><path d="M5 8l5-1 4 5-5 3z" fill="#6b8bc0"/></svg></button>
      <div class="tray">
        <span>▴</span>
        <svg viewBox="0 0 10 10"><path d="M2 1h5v7H2z" fill="#eee"/><circle cx="7" cy="6" r="2.800" fill="#d33"/></svg>
        <svg viewBox="0 0 10 10"><path d="M1 3h5v6H1zM5 1h4v5H5z" fill="#dde6ef" stroke="#567"/></svg>
        <svg viewBox="0 0 10 10"><path d="M1 3h8v4H1zM3 9h5" fill="#dde6ef" stroke="#567"/></svg>
        <svg viewBox="0 0 10 10"><path d="M2 4h2l2-3v8L4 6H2z" fill="#fff"/></svg>
        <time>13:51<br>16/11/2010</time>
      </div>
      <i class="peekbtn"></i>
    </div>

    <footer class="player">
      <div class="seek"><span>00:38</span><input type="range" min="0" max="262" value="38" aria-label="Position"><span>04:22</span></div>
      <div class="controls">
        <button class="play" aria-label="Play"><svg viewBox="0 0 14 14"><path d="M3 1l9 6-9 6z" fill="#777" stroke="#444"/></svg></button>
        <div class="grp">
          <button aria-label="Previous"><svg viewBox="0 0 12 12"><path d="M1 3v6M6 3v6L2 6zM11 3v6L7 6z" fill="#444" stroke="#444"/></svg></button>
          <button aria-label="Stop"><svg viewBox="0 0 12 12"><path d="M2 2h8v8H2z" fill="#555"/></svg></button>
          <button aria-label="Next"><svg viewBox="0 0 12 12"><path d="M11 3v6M6 3v6l4-3zM1 3v6l4-3z" fill="#444" stroke="#444"/></svg></button>
        </div>
        <div class="grp">
          <button aria-label="Fullscreen"><svg viewBox="0 0 12 12"><path d="M1 1h10v10H1z" fill="#333"/><path d="M6 3h3v3zM3 7h3v3H3z" fill="#fff"/></svg></button>
          <button aria-label="Settings"><svg viewBox="0 0 12 12"><path d="M2 1v10M6 1v10M10 1v10M0 7h4M4 4h4M8 8h4" stroke="#333" stroke-width="1.500"/></svg></button>
        </div>
        <div class="grp">
          <button aria-label="Playlist"><svg viewBox="0 0 12 12"><path d="M4 2h7M4 5h7M4 8h7M4 11h7" stroke="#999"/><path d="M1 2h2M1 5h2M1 8h2M1 11h2" stroke="#333"/></svg></button>
          <button aria-label="Loop"><svg viewBox="0 0 12 12"><path d="M2 8V4h7M10 4v5H4" fill="none" stroke="#333" stroke-width="2"/><path d="M7 1l4 3-4 3zM5 6L1 9l4 3z" fill="#333"/></svg></button>
          <button aria-label="Shuffle"><svg viewBox="0 0 12 12"><path d="M0 3h3l5 6h2M0 9h3l5-6h2" fill="none" stroke="#333" stroke-width="1.800"/><path d="M9 0l3 3-3 3zM9 6l3 3-3 3z" fill="#333"/></svg></button>
        </div>
        <label class="volume">
          <svg class="spk" viewBox="0 0 8 10"><path d="M1 4h2l3-3v8L3 6H1z" fill="#fff" stroke="#555" stroke-width=".8"/><path d="M7.500 3v4" stroke="#777" stroke-width=".7"/></svg>
          <svg class="tri" viewBox="0 0 50 16"><path d="M1 14L18 9v5z" fill="#44cf55"/><path d="M1 14.500L49 1v13.500z" fill="none" stroke="#555" stroke-width=".8"/></svg>
          <span>45%</span>
          <input type="range" value="45" aria-label="Volume">
        </label>
      </div>
    </footer>
  </div>
</section>
</main>
</body>
</html>
```

FILE: styles.css
```css
* { box-sizing: border-box; }
body { margin: 0; font: 6px/8px "Open Sans", sans-serif; color: #222; }
h1, h2, h3, h4, ul { margin: 0; padding: 0; font: inherit; }
a { color: inherit; text-decoration: none; }
button, input, select { font: inherit; color: inherit; margin: 0; padding: 0; border: 0; background: none; border-radius: 0; }
select { appearance: none; }
svg { display: block; flex: none; }
.defs { position: absolute; }

.desktop { min-height: 100vh; padding: 4px 3px 4px 4px; background: linear-gradient(#3a6f9f, #2b659c 70%, #1f5590); display: flex; }
.window { flex: 1; min-width: 0; background: #5a8bbc; padding: 0 4px 4px; display: flex; flex-direction: column; }

.titlebar { display: grid; grid-template-columns: 96px 1fr 96px; align-items: center; height: 18px; }
.cone { width: 8px; height: 8px; margin-left: 3px; }
.titlebar h1 { font-size: 9px; line-height: 12px; text-align: center; color: #16232f; }
.winbtns { display: flex; justify-content: flex-end; align-self: start; }
.winbtns button { width: 16px; height: 12px; display: grid; place-items: center; }
.winbtns svg { width: 9px; height: 9px; }
.winbtns .close { width: 27px; background: #cf4744; }

.client { flex: 1; background: #f1f1f1; display: flex; flex-direction: column; }
.menubar { display: flex; gap: 10px; padding: 0 5px; font-size: 7px; line-height: 12px; height: 13px; background: #f7f7f7; color: #111; }
.apptitle { display: flex; align-items: center; height: 9px; background: linear-gradient(90deg, #a9c1de, #bfd2e8); border-top: 1px solid #8fa6c0; font-size: 5px; }
.mlogo { width: 9px; height: 8px; }
.apptitle h2 { flex: 1; margin-left: 4px; font-family: Roboto, sans-serif; font-size: 6px; color: #111; white-space: nowrap; }
.appbtns { display: flex; gap: 1px; }
.appbtns button { width: 15px; height: 8px; line-height: 6px; background: linear-gradient(#d8e4f1, #a8bfda); border: 1px solid #8ea7c4; color: #5d7590; }
.appbtns .red { background: #cd5a50; color: #fff; }
.appmenu { display: flex; gap: 7px; padding: 0 8px; height: 12px; line-height: 12px; font-size: 6px; background: #f4f5f7; color: #333; }

.toolbar { display: flex; align-items: center; height: 13px; padding-left: 6px; background: #f6f7f8; }
.toolbar button { width: 11px; height: 12px; display: grid; place-items: center; flex: none; line-height: 10px; }
.toolbar button svg { width: 9px; height: 9px; }
.toolbar .s { width: 6px; }
.toolbar .s svg { width: 6px; }
.toolbar .wide { width: 16px; }
.toolbar .wide svg { width: 14px; }
.toolbar .on { border: 1px solid #8fb6df; background: #e5f0fb; }
.toolbar .mark { width: 9px; margin: 0 1px; border-bottom: 2px solid #b3ac48; height: 10px; line-height: 8px; }
.sep { width: 1px; height: 9px; background: #d4d7da; margin: 0 4px 0 3px; flex: none; }
.sep.n { margin: 0 2px; }
.gap { width: 5px; flex: none; }
.gap.n { width: 4px; }
.viewname { width: 75px; padding-left: 16px; font-size: 6px; flex: none; }
.frame { width: 54px; height: 11px; border: 1px solid #8fb0d0; padding-left: 2px; font-size: 6px; background: linear-gradient(90deg, #fff 88%, #b5d0ec 88%); }
.wind { width: 29px; height: 10px; border: 1px solid #bbb; color: #999; background: #eee; padding-left: 1px; }

.work { display: grid; grid-template-columns: minmax(0, 1fr) 177px; gap: 2px; flex: 1; border-top: 1px solid #a3a9b0; }
.left { display: flex; flex-direction: column; min-width: 0; }
.canvas { position: relative; flex: 1; background: #fff; border: 1px solid #999; border-width: 1px 0 0 1px; margin-left: 2px; }
.model { width: 100%; height: auto; }
.axislabel { font: 8px "Open Sans", sans-serif; fill: #333; }
.brand { position: absolute; left: 1px; bottom: 2px; display: flex; gap: 12px; align-items: center; }
.brand > svg { width: 41px; height: 44px; }
.brand strong { display: block; font: 700 29px/27px Lato, sans-serif; color: #d0d0d0; }
.brand span { display: block; font: 700 10px/12px Roboto, sans-serif; color: #222; white-space: nowrap; }
.loadrow { display: flex; align-items: center; height: 13px; padding-left: 1px; }
.loadrow select { flex: 1; height: 10px; padding-left: 2px; font-size: 5px; background: linear-gradient(#f2f2f2, #d9d9d9); border: 1px solid #aaa; }
.spin { width: 6px; height: 9px; }

.panel { background: #eeeff0; display: flex; flex-direction: column; min-width: 0; font-size: 5px; line-height: 8px; }
.panel > header { display: flex; gap: 3px; height: 10px; background: #f4f4f4; padding-right: 4px; }
.panel h3 { flex: 1; font-weight: 700; font-size: 6px; line-height: 9px; text-align: center; background: #b5cae5; color: #1c2a40; }
.panel header button { width: 8px; }
.tabs { display: flex; align-items: center; height: 18px; padding-left: 1px; gap: 1px; background: #f7f7f8; }
.tabs button { height: 10px; padding: 0 1px; font-size: 6px; }
.tabs button:first-child { padding: 0; }
.tabs span { margin-left: 2px; font-size: 6px; }
.tabs .on { border: 1px solid #9dbfe0; background: #eef5fc; padding: 0; }
.tabs .ic { width: 12px; display: grid; place-items: center; }
.tabs .ic svg { width: 10px; height: 8px; }
.body { flex: 1; display: flex; flex-direction: column; padding: 0 6px; }
.graphrow { display: flex; align-items: center; height: 10px; gap: 2px; }
.graphrow label { width: 50px; white-space: nowrap; }
.combo { position: relative; flex: 1; }
.combo select { display: block; width: 100%; height: 9px; padding-left: 2px; color: #10355d; border: 1px solid #6fa3d2; background: linear-gradient(#e4f1fb, #a9d1f1); }
.caret { position: absolute; right: 2px; top: 3px; width: 6px; height: 4px; pointer-events: none; }
.combo ul { position: absolute; z-index: 2; top: 9px; left: 0; width: 100%; list-style: none; background: #fff; border: 1px solid #888; border-top: 0; line-height: 6px; }
.combo li { padding-left: 1px; white-space: nowrap; position: relative; height: 6px; }
.combo .sel { background: #3596e8; color: #e8f4ff; }
.cursor { position: absolute; left: 55px; top: 1px; width: 7px; height: 9px; z-index: 3; }
.body h4 { padding-left: 2px; height: 8px; }
.opt { display: flex; align-items: center; gap: 4px; height: 12px; padding-left: 1px; }
input[type="radio"] { appearance: none; width: 5px; height: 5px; border: 1px solid #9aa3ad; border-radius: 50%; background: #fff; }
input[type="radio"]:checked { background: #2572b9; }
.field { display: flex; align-items: center; gap: 6px; }
.field .nc { width: 24px; height: 9px; padding-left: 3px; border: 1px solid #aaa; background: #e4e4e4; }
.body .first { height: 14px; margin-top: 2px; }
.ucv { margin-top: 2px; }
.field input { flex: 1; height: 9px; background: #fff; }
.maxrow { margin-top: 3px; height: 10px; }
.icons { display: flex; gap: 1px; height: 14px; margin-top: 6px; align-items: center; }
.icons button { width: 11px; }
.icons svg { width: 10px; height: 9px; }
.icons + h4 { margin-top: 5px; }
.dia { height: 11px; }
.dia .hot { background: #fbc773; width: 10px; height: 9px; display: grid; place-items: center; }
.dia svg { width: 8px; height: 8px; }
.ra { margin-top: 3px; }
.axis { display: flex; gap: 8px; height: 8px; }
.axis label { display: flex; align-items: center; gap: 3px; }
.rule { height: 1px; background: #fff; margin: 32px 0 auto; }
.apply { display: flex; justify-content: center; background: #f7f7f7; height: 9px; }
.apply button { background: #8d8d8d; color: #e9e9e9; height: 7px; line-height: 7px; width: 49px; align-self: flex-end; font-size: 6px; }
.actions { display: grid; grid-template-columns: 1fr 1fr; gap: 1px; margin-top: 3px; }
.actions button { height: 11px; background: #f7f7f7; display: grid; place-items: center; }
.actions .draw { background: linear-gradient(#ffcf87, #fdb350); border: 1px solid #e6b871; }
.actions .tall { height: 17px; }
.actions svg { width: 16px; height: 14px; }
.actions .sm { width: 9px; height: 9px; }
.closebtn { height: 10px; margin: 1px 0 7px; background: #f8f8f8; }
.ptabs { display: grid; grid-template-columns: repeat(4, 1fr); gap: 2px; padding: 0 2px; margin-bottom: 2px; }
.ptabs button { display: flex; align-items: center; justify-content: center; gap: 1px; height: 13px; background: #f4f4f5; }
.ptabs svg { width: 8px; height: 8px; }
.ptabs .cur { background: #fff; }

.status { display: flex; align-items: center; gap: 3px; height: 11px; padding-left: 3px; font-size: 6px; background: #f4f4f4; }
.status input { width: 62px; height: 7px; background: #d8d8d8; border: 1px solid #bbb; }
.status svg { width: 8px; height: 8px; }
.msg { margin-left: 3px; }

.taskbar { display: flex; align-items: center; height: 18px; background: linear-gradient(90deg, #7d9abf, #a7bddd 8%, #a9c4ea 80%, #8499b5 88%); gap: 3px; }
.taskbar > button { width: 27px; height: 18px; display: grid; place-items: center; }
.taskbar > button svg { width: 15px; height: 15px; }
.taskbar .active { background: #eef3fa; border: 1px solid #8ea6c6; }
.tray { margin-left: auto; display: flex; align-items: center; gap: 3px; color: #fff; font-size: 5px; }
.tray svg { width: 8px; height: 8px; }
.tray time { line-height: 8px; text-align: center; margin: 0 6px 0 10px; }
.peekbtn { width: 7px; height: 18px; background: #6d819c; }

.player { background: #efefef; }
.seek { display: flex; align-items: center; gap: 9px; height: 12px; padding: 0 4px 0 6px; font-size: 7px; }
.seek input { flex: 1; min-width: 0; appearance: none; height: 5px; border-radius: 2px; background: linear-gradient(90deg, #1f78cf 15%, #c6c6c6 15%); }
.seek input::-webkit-slider-thumb { appearance: none; width: 0; height: 0; }
.controls { display: flex; gap: 9px; align-items: center; height: 20px; padding: 0 4px 2px 3px; }
.controls button { width: 15px; height: 15px; border: 1px solid #bbb; background: #f5f5f5; display: grid; place-items: center; }
.controls button svg { width: 11px; height: 11px; }
.controls .play { width: 18px; height: 18px; }
.grp { display: flex; gap: 1px; }
.volume { position: relative; margin-left: auto; display: flex; align-items: flex-end; gap: 5px; padding-right: 2px; }
.spk { width: 8px; height: 9px; }
.tri { width: 50px; height: 16px; }
.volume span { position: absolute; left: 18px; top: 0; color: #777; font-size: 6px; }
.volume input { position: absolute; inset: 0; width: 100%; opacity: 0; }
```
